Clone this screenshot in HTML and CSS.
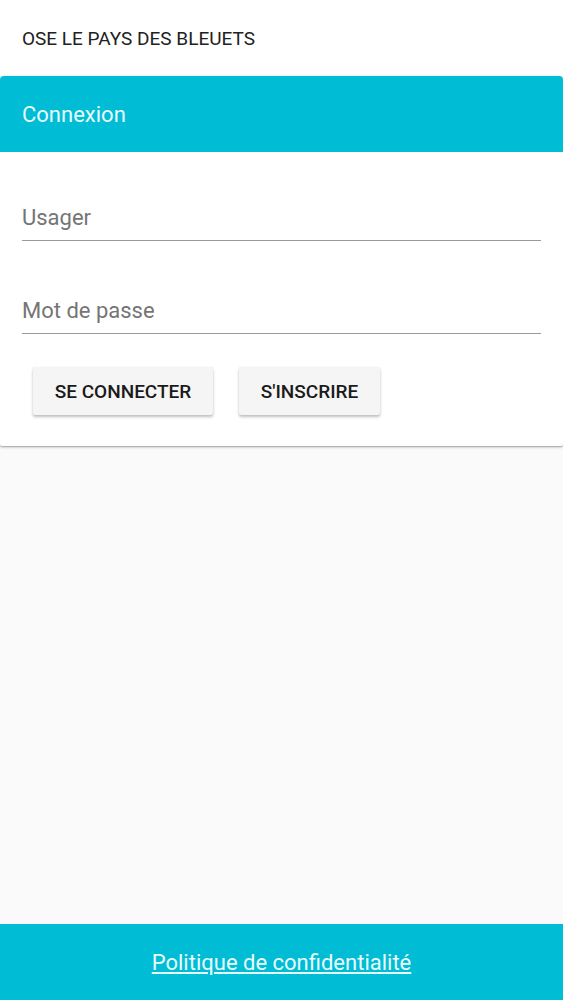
FILE: index.html
```html
<!DOCTYPE html>
<html lang="fr">
<head>
<meta charset="utf-8">
<title>Connexion</title>
<link rel="stylesheet" href="styles.css">
</head>
<body>
<div class="page">
  <header class="topbar">OSE LE PAYS DES BLEUETS</header>
  <main class="main">
    <section class="card">
      <div class="card-head">Connexion</div>
      <div class="card-body">
        <label class="field"><input class="input" type="text" placeholder="Usager"></label>
        <label class="field"><input class="input" type="password" placeholder="Mot de passe"></label>
        <div class="actions">
          <button class="btn btn-login" type="button">SE CONNECTER</button>
          <button class="btn btn-signup" type="button">S'INSCRIRE</button>
        </div>
      </div>
    </section>
  </main>
  <footer class="footer"><a class="footer-link" href="#">Politique de confidentialité</a></footer>
</div>
</body>
</html>
```
FILE: styles.css
```css
* { box-sizing: border-box; }
html, body { margin: 0; padding: 0; }
body {
  font-family: Roboto, "Noto Sans", sans-serif;
  background: #fafafa;
}
.page {
  height: 1000px;
  display: flex;
  flex-direction: column;
}
.topbar {
  height: 76px;
  background: #ffffff;
  display: flex;
  align-items: center;
  padding: 0 22px;
  font-size: 19px;
  color: #212121;
  flex: none;
}
.main {
  flex: 1;
}
.card {
  background: #ffffff;
  border-radius: 4px 4px 2px 2px;
  box-shadow: 0 1px 3px rgba(0,0,0,0.3), 0 1px 1px rgba(0,0,0,0.12);
  overflow: hidden;
}
.card-head {
  height: 76px;
  background: #00bcd4;
  color: #e8fbfd;
  font-size: 22px;
  display: flex;
  align-items: center;
  padding: 0 22px;
}
.card-body {
  padding: 28px 22px 31px;
}
.field {
  display: block;
  margin-bottom: 32px;
}
.input {
  display: block;
  width: 100%;
  height: 61px;
  border: none;
  border-bottom: 1.5px solid #9a9a9a;
  background: transparent;
  font-family: Roboto, "Noto Sans", sans-serif;
  font-size: 22px;
  line-height: 26px;
  color: #212121;
  padding: 24px 0 9px;
  outline: none;
}
.input::placeholder { color: #757575; }
.field:nth-child(2) { margin-bottom: 33px; }
.actions {
  display: flex;
  gap: 26px;
  padding-left: 11px;
}
.btn {
  height: 48px;
  border: none;
  border-radius: 2px;
  background: #f5f5f5;
  box-shadow: 0 2px 3px rgba(0,0,0,0.25), 0 0 1px rgba(0,0,0,0.1);
  font-family: Roboto, "Noto Sans", sans-serif;
  font-weight: 500;
  font-size: 19px;
  color: #1a1a1a;
  padding: 0;
}
.btn-login { width: 180px; }
.btn-signup { width: 141px; }
.footer {
  height: 76px;
  flex: none;
  background: #00bcd4;
  display: flex;
  align-items: center;
  justify-content: center;
}
.footer-link {
  color: #e8fbfd;
  font-size: 22px;
  text-decoration: underline;
}
```
